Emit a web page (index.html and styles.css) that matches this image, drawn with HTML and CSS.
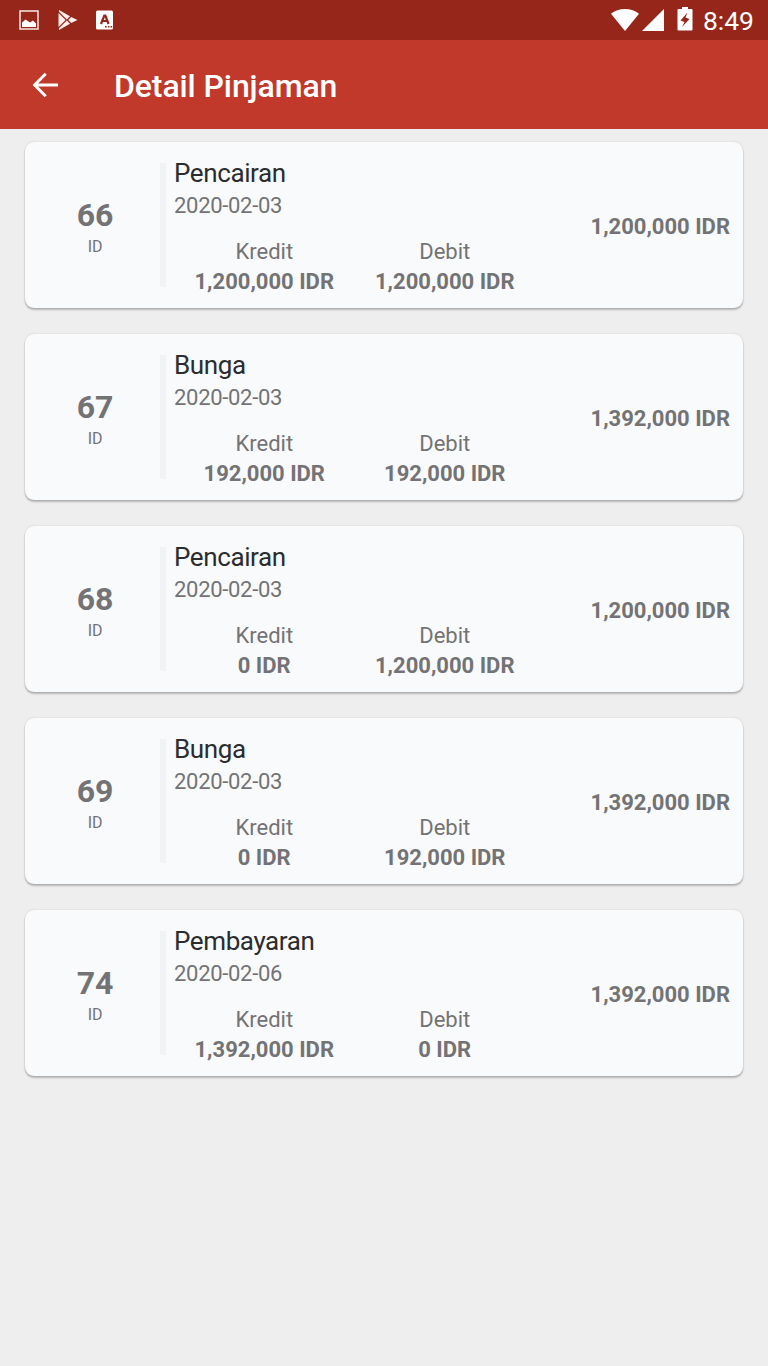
FILE: index.html
```
<!DOCTYPE html>
<html lang="id">
<head>
<meta charset="UTF-8" />
<meta name="viewport" content="width=device-width, initial-scale=1" />
<title>Detail Pinjaman</title>
<link rel="stylesheet" href="styles.css">
</head>
<body>

<div class="status-bar">
  <div class="status-left">
    <svg width="20" height="20" viewBox="0 0 20 20"><path fill="none" stroke="#f9e9e5" stroke-width="1.5" d="M1 1h18v18H1z"/><path fill="#fff" d="M3 17v-4.500l3.500-3 4.500 3 3-2 3 3V17z"/></svg>
    <svg width="20" height="20" viewBox="0 0 20 20"><path fill="#fbeeea" d="M1 0l11 6.2-3.2 3.2L1 1.700zM0.500 3l7.100 7-7.100 7zM1 20l11-6.200-3.200-3.200L1 18.300zM13.200 7l6.300 3-6.300 3-3-3z"/></svg>
    <svg class="app" width="17" height="20" viewBox="0 0 17 20"><rect width="17" height="19" y="0.500" rx="1.500" fill="#fff"/><path fill="none" stroke="#96261a" stroke-width="2.200" d="M5 14l3.300-8.500h1L12.600 14M6.500 11h5"/><path fill="#96261a" d="M9 16h1.700v1.500H9zM11.800 16h1.700v1.500h-1.700zM14.500 16h1.700v1.500h-1.700z"/></svg>
  </div>
  <div class="status-right">
    <svg class="wifi" width="28" height="22" viewBox="0 0 28 22"><path fill="#fff" d="M14 22L0 4.800C3.500 1.600 8.600 0 14 0s10.500 1.600 14 4.800z"/></svg>
    <svg class="signal" width="22" height="22" viewBox="0 0 22 22"><path fill="#fff" d="M22 0v22H0z"/></svg>
    <svg class="battery" width="16" height="24" viewBox="0 0 16 24"><path fill="#fff" d="M5 0h6v2h3.500q1 0 1 1v19.500q0 1-1 1h-13q-1 0-1-1V3q0-1 1-1H5z"/><path fill="#96261a" d="M10.500 5.500L3.500 13.500l4 1.500-2.500 5 7.500-8-4-1.500z"/></svg>
    <span class="clock">8:49</span>
  </div>
</div>

<div class="toolbar">
  <svg class="back" width="26" height="26" viewBox="0 0 26 26"><path fill="none" stroke="#fff" stroke-width="2.900" d="M26 13H3M13.700 1.800L2.600 13l11.100 11.200"/></svg>
  <h1>Detail Pinjaman</h1>
</div>

<div class="list" id="list"></div>

<script>
  const items = [
    { id: 66, name: "Pencairan", date: "2020-02-03", kredit: "1,200,000", debit: "1,200,000", saldo: "1,200,000" },
    { id: 67, name: "Bunga", date: "2020-02-03", kredit: "192,000", debit: "192,000", saldo: "1,392,000" },
    { id: 68, name: "Pencairan", date: "2020-02-03", kredit: "0", debit: "1,200,000", saldo: "1,200,000" },
    { id: 69, name: "Bunga", date: "2020-02-03", kredit: "0", debit: "192,000", saldo: "1,392,000" },
    { id: 74, name: "Pembayaran", date: "2020-02-06", kredit: "1,392,000", debit: "0", saldo: "1,392,000" }
  ];

  document.getElementById("list").innerHTML = items.map(item => `
    <div class="card">
      <div class="card-id"><b>${item.id}</b><span>ID</span></div>
      <div class="divider"></div>
      <div class="info">
        <div class="name">${item.name}</div>
        <div class="date">${item.date}</div>
        <div class="amounts">
          <div>Kredit<b>${item.kredit} IDR</b></div>
          <div>Debit<b>${item.debit} IDR</b></div>
        </div>
      </div>
      <div class="total">${item.saldo} IDR</div>
    </div>`).join("");
</script>

</body>
</html>
```

FILE: styles.css
```
* { box-sizing: border-box; }
body {
  margin: 0;
  min-height: 100vh;
  background: #eee;
  color: #737375;
  font-family: Roboto, sans-serif;
}
svg { display: block; }
.status-bar {
  display: flex;
  justify-content: space-between;
  height: 40px;
  padding: 0 14px 0 19px;
  background: #96261a;
}
.status-left {
  display: flex;
  align-items: center;
  gap: 19px;
}
.app { margin-left: -1px; }
.status-right {
  display: flex;
  align-items: center;
}
.signal { margin-left: 3px; }
.battery { margin: 0 10px 2px 13px; }
.clock {
  color: #fff;
  font-size: 26.5px;
  line-height: 40px;
  padding-top: 2px;
}
.toolbar {
  display: flex;
  align-items: center;
  height: 89px;
  padding-left: 32px;
  background: #c0392b;
  color: #fff;
}
.toolbar h1 {
  margin: 3px 0 0 56px;
  font-size: 32px;
  font-weight: 500;
  letter-spacing: -0.1px;
}
.list {
  display: flex;
  flex-direction: column;
  gap: 26px;
  padding: 13px 25px;
}
.card {
  display: flex;
  height: 166px;
  padding-right: 13px;
  background: #f9fafc;
  border-radius: 9px;
  box-shadow: 0 2px 2px rgba(0,0,0,0.24), 0 0 2px rgba(0,0,0,0.14);
}
.card-id {
  display: flex;
  flex-direction: column;
  align-items: center;
  width: 135px;
  padding: 53px 0 0 5px;
  font-size: 16px;
  line-height: 20px;
}
.card-id b {
  font-size: 32px;
  line-height: 40px;
}
.card-id span {
  margin-top: 2px;
  letter-spacing: -0.3px;
}
.divider {
  width: 6px;
  margin: 21px 8px 21px 0;
  background: #f1f2f4;
}
.info {
  width: 361px;
  padding-top: 15px;
}
.name {
  color: #2b2c2e;
  font-size: 26px;
  line-height: 32px;
  letter-spacing: -0.4px;
}
.date {
  margin-top: 2px;
  font-size: 22px;
  line-height: 30px;
  letter-spacing: -0.3px;
}
.amounts {
  display: grid;
  grid-template-columns: 1fr 1fr;
  margin-top: 16px;
  font-size: 22px;
  line-height: 30px;
  text-align: center;
}
.amounts b { display: block; }
.total {
  align-self: center;
  margin: 3px 0 0 auto;
  font-size: 22px;
  font-weight: bold;
}
```
